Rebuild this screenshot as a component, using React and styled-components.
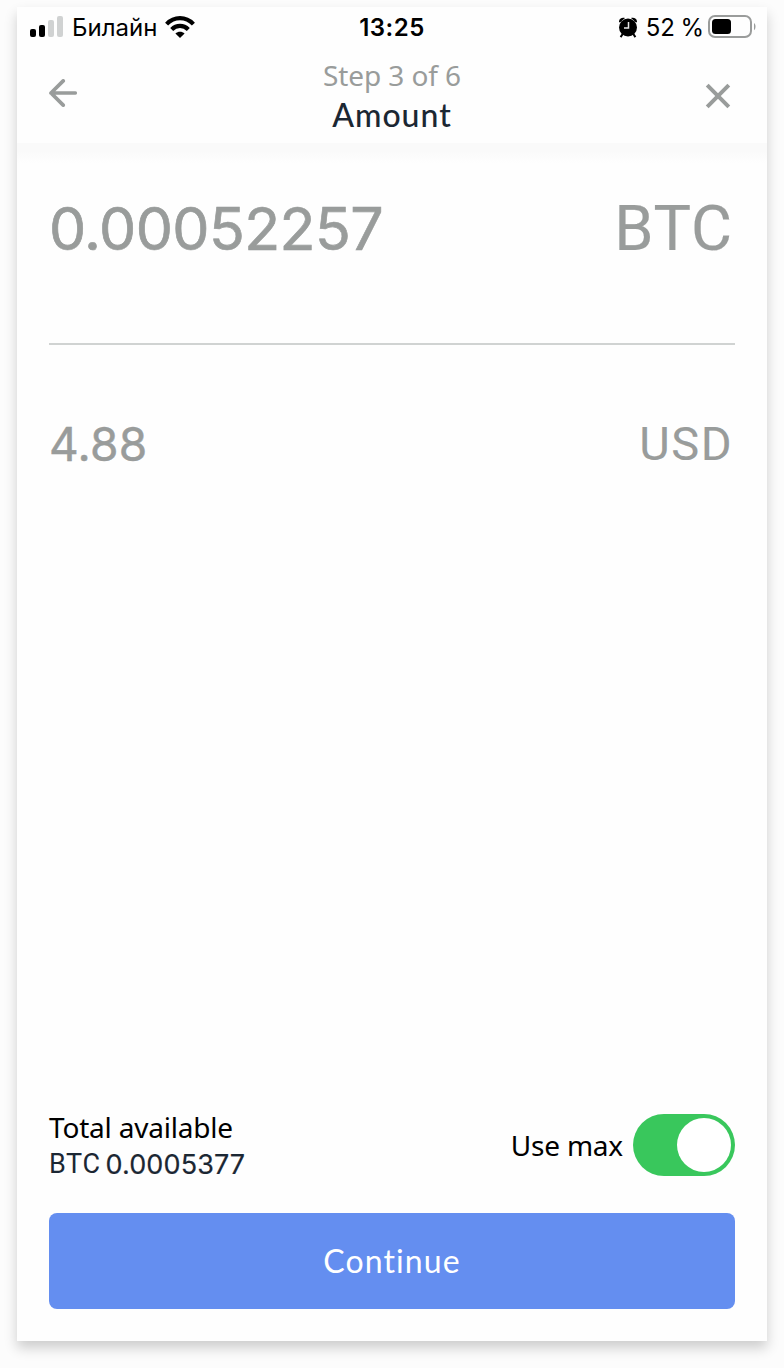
import React, { useState } from "react";
import styled, { createGlobalStyle } from "styled-components";

const App = () => {
   const [useMax, setUseMax] = useState(true);

   return (
      <>
         <GlobalStyle />
         <Screen>
            <Top>
               <StatusBar>
                  <Carrier>
                     <SignalIcon />
                     <StatusText>Билайн</StatusText>
                     <WifiIcon />
                  </Carrier>
                  <Clock>13:25</Clock>
                  <Power>
                     <AlarmIcon />
                     <StatusText $spacing={-0.1}>52 %</StatusText>
                     <BatteryIcon />
                  </Power>
               </StatusBar>
               <Header>
                  <IconButton aria-label="Back">
                     <BackIcon />
                  </IconButton>
                  <Heading>
                     <Step>Step 3 of 6</Step>
                     <Title>Amount</Title>
                  </Heading>
                  <IconButton aria-label="Close">
                     <CloseIcon />
                  </IconButton>
               </Header>
            </Top>
            <HeaderShade />
            <Form>
               <CryptoRow>
                  <Value $size={59} $spacing={-0.6} $stroke={0.7}>
                     0.00052257
                  </Value>
                  <Currency $size={63} $spacing={0.9} $stroke={0.2}>
                     BTC
                  </Currency>
               </CryptoRow>
               <FiatRow>
                  <Value $size={46} $spacing={0.3} $stroke={0.5}>
                     4.88
                  </Value>
                  <Currency $size={47} $spacing={1.5} $stroke={0.1}>
                     USD
                  </Currency>
               </FiatRow>
            </Form>
            <Footer>
               <Balance>
                  <div>
                     <Label>Total available</Label>
                     <Total>
                        <Currency $size={27} $spacing={0.6}>
                           BTC
                        </Currency>
                        <Value $size={27} $spacing={0.1} $stroke={0.2}>
                           0.0005377
                        </Value>
                     </Total>
                  </div>
                  <MaxOption>
                     <Label>Use max</Label>
                     <Toggle
                        role="switch"
                        aria-checked={useMax}
                        $on={useMax}
                        onClick={() => setUseMax(!useMax)}
                     >
                        <Knob />
                     </Toggle>
                  </MaxOption>
               </Balance>
               <Continue>Continue</Continue>
            </Footer>
         </Screen>
      </>
   );
};

export default App;

const SignalIcon = () => (
   <svg width="34" height="22" viewBox="0 0 34 22">
      <rect x="0" y="13" width="6" height="8" rx="2" fill="#000" />
      <rect x="9" y="9" width="6" height="12" rx="2" fill="#000" />
      <rect x="18" y="4" width="6" height="17" rx="2" fill="#d0d2d2" />
      <rect x="27" y="0" width="6" height="21" rx="2" fill="#d0d2d2" />
   </svg>
);

const WifiIcon = () => (
   <svg width="30" height="22" viewBox="0 0 30 22">
      <g fill="none" stroke="#000" strokeWidth="4.2">
         <path d="M1.6 8.1C9.2.2 20.8.2 28.4 8.1" />
         <path d="M6.7 13.4C11.4 8.7 18.6 8.7 23.3 13.4" />
      </g>
      <path d="M15 22l-4.6-4.4c2.6-2.4 6.6-2.4 9.200 0z" fill="#000" />
   </svg>
);

const AlarmIcon = () => (
   <svg width="18" height="21" viewBox="0 0 18 21">
      <path d="M0 5C-.2 1.500 3 .1 6 1L1 5.500zM18 5C18.200 1.500 15 .1 12 1l5 4.500z" />
      <path d="M4 16.500l-2.400 3.600M14 16.500l2.400 3.600" stroke="#000" strokeWidth="2" />
      <circle cx="9" cy="10.500" r="9" fill="#000" />
      <path d="M9.500 5v6H5" fill="none" stroke="#e8e8e8" strokeWidth="1.500" />
   </svg>
);

const BatteryIcon = () => (
   <svg width="48" height="24" viewBox="0 0 48 24">
      <rect
         x="1"
         y="1"
         width="42"
         height="21"
         rx="6"
         fill="none"
         stroke="#9a9c9b"
         strokeWidth="2"
      />
      <rect x="4" y="4" width="19" height="15" rx="3.5" fill="#000" />
      <path d="M46 8c2 1.4 2 5.8 0 7.2z" fill="#9a9c9b" />
   </svg>
);

const BackIcon = () => (
   <svg width="28" height="28" viewBox="0 0 28 28">
      <path
         d="M14.200 1.900L2 14l12.200 12.100M2 14h24.200"
         fill="none"
         stroke="#999c9b"
         strokeWidth="3.7"
         strokeLinecap="round"
         strokeLinejoin="round"
      />
   </svg>
);

const CloseIcon = () => (
   <svg width="26" height="26" viewBox="0 0 26 26">
      <path
         d="M2.2 2.200l21.600 21.600M23.800 2.200L2.200 23.800"
         fill="none"
         stroke="#999c9b"
         strokeWidth="4"
      />
   </svg>
);

const GlobalStyle = createGlobalStyle`
   * {
      box-sizing: border-box;
   }
   body {
      margin: 0;
      background: #fcfcfc;
      overflow: hidden;
   }
   svg {
      display: block;
      flex-shrink: 0;
   }
`;

const Screen = styled.main`
   width: 750px;
   height: 1334px;
   margin: 7px 17px 27px;
   display: flex;
   flex-direction: column;
   background: #fefefe;
   box-shadow: 0 7px 12px rgba(0, 0, 0, 0.19);
`;

const Top = styled.div`
   height: 136px;
   flex-shrink: 0;
`;

const StatusBar = styled.div`
   height: 40px;
   padding: 1px 11px 0 13px;
   display: grid;
   grid-template-columns: 1fr auto 1fr;
   align-items: center;
   color: #000;
   font-family: Inter, "Liberation Sans", sans-serif;
   svg {
      margin-top: -1px;
   }
`;

const Carrier = styled.div`
   display: flex;
   align-items: center;
   gap: 8px;
`;

const Power = styled.div`
   display: flex;
   align-items: center;
   justify-content: flex-end;
   gap: 9px;
   svg:last-child {
      margin-left: -5px;
   }
`;

const StatusText = styled.span`
   font-size: 24px;
   line-height: 30px;
   letter-spacing: ${({ $spacing = 0 }) => $spacing}px;
   word-spacing: ${({ $spacing = 0 }) => $spacing * 8}px;
`;

const Clock = styled.span`
   margin-left: -2px;
   font-size: 24px;
   line-height: 30px;
   font-weight: 600;
   letter-spacing: 0.5px;
`;

const Header = styled.header`
   height: 96px;
   padding: 0 32px;
   display: flex;
   justify-content: space-between;
`;

const IconButton = styled.button`
   width: 28px;
   height: 96px;
   padding: 32px 0 0;
   border: 0;
   background: none;
   display: flex;
   justify-content: center;
   align-items: flex-start;
   &:last-child {
      width: 34px;
      padding-top: 36px;
   }
`;

const Heading = styled.div`
   padding: 10px 0 0 6px;
   text-align: center;
`;

const Step = styled.div`
   color: #999c9b;
   font: 28px/36px "Noto Sans", sans-serif;
   letter-spacing: -0.1px;
`;

const Title = styled.h1`
   margin: 1px 0 0;
   color: #1b2733;
   font: 500 32px/42px Lato, sans-serif;
   letter-spacing: 1px;
`;

const HeaderShade = styled.div`
   height: 20px;
   flex-shrink: 0;
   background: linear-gradient(#fafafa 40%, #fefefe);
`;

const Form = styled.section`
   flex: 1;
   padding: 0 32px;
   color: #999c9b;
`;

const CryptoRow = styled.div`
   height: 182px;
   padding: 30px 2px 0 0;
   display: flex;
   justify-content: space-between;
   line-height: 72px;
   border-bottom: 2px solid #d0d3d2;
`;

const FiatRow = styled.div`
   padding: 63px 2px 0 0;
   display: flex;
   justify-content: space-between;
   line-height: 72px;
`;

const Value = styled.span`
   font-family: Inter, sans-serif;
   font-size: ${({ $size }) => $size}px;
   letter-spacing: ${({ $spacing }) => $spacing}px;
   -webkit-text-stroke: ${({ $stroke = 0 }) => $stroke}px currentColor;
`;

const Currency = styled(Value)`
   font-family: Roboto, sans-serif;
`;

const Footer = styled.footer`
   padding: 0 32px 32px;
`;

const Balance = styled.div`
   height: 104px;
   display: flex;
   justify-content: space-between;
`;

const Label = styled.div`
   color: #000;
   font: 28px/36px "Noto Sans", sans-serif;
   letter-spacing: -0.2px;
`;

const Total = styled.div`
   padding-top: 1px;
   display: flex;
   gap: 5px;
   color: #1b2733;
   line-height: 37px;
`;

const MaxOption = styled.div`
   height: 72px;
   display: flex;
   align-items: center;
   gap: 10px;
`;

const Toggle = styled.button`
   width: 102px;
   height: 62px;
   padding: 4px;
   border: 0;
   border-radius: 31px;
   display: flex;
   justify-content: ${({ $on }) => ($on ? "flex-end" : "flex-start")};
   background: ${({ $on }) => ($on ? "#39c75c" : "#e4e6e6")};
   cursor: pointer;
`;

const Knob = styled.span`
   width: 54px;
   height: 54px;
   border-radius: 50%;
   background: #fff;
`;

const Continue = styled.button`
   width: 100%;
   height: 96px;
   padding: 0;
   border: 0;
   border-radius: 8px;
   background: #648ef0;
   color: #fff;
   font: 32px/40px Lato, sans-serif;
   letter-spacing: 1.1px;
   cursor: pointer;
`;
